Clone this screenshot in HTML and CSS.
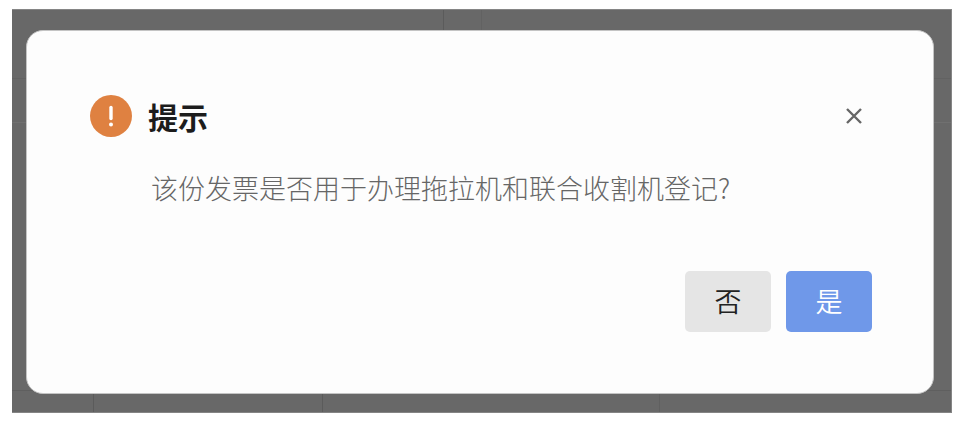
FILE: index.html
```
<!DOCTYPE html>
<html lang="zh-CN">

<head>
    <meta charset="UTF-8">
    <meta name="viewport" content="width=device-width, initial-scale=1.0">
    <link rel="stylesheet" href="styles.css">
    <title>提示</title>
</head>

<body>
    <main class="overlay">
        <section class="dialog" role="dialog" aria-labelledby="dialog-title" aria-describedby="dialog-message">
            <header class="dialog-header">
                <svg class="warning-icon" viewBox="0 0 42 42" aria-hidden="true">
                    <circle cx="21" cy="21" r="21" fill="#df8141" />
                    <path d="M21 12.5V23.5" stroke="#fff" stroke-width="3.4" stroke-linecap="round" />
                    <circle cx="21" cy="29.6" r="2" fill="#fff" />
                </svg>
                <h1 class="dialog-title" id="dialog-title">提示</h1>
                <button class="close-button" type="button" aria-label="关闭">
                    <svg class="close-icon" viewBox="0 0 16 16" aria-hidden="true">
                        <path d="M1 1L15 15M15 1L1 15" stroke="#666" stroke-width="2.4" />
                    </svg>
                </button>
            </header>
            <p class="dialog-message" id="dialog-message">该份发票是否用于办理拖拉机和联合收割机登记?</p>
            <footer class="dialog-footer">
                <button class="button" type="button">否</button>
                <button class="button button-primary" type="button">是</button>
            </footer>
        </section>
    </main>
</body>

</html>
```
FILE: styles.css
```
* {
    box-sizing: border-box;
}

body {
    margin: 9px 8px 9px 12px;
    background-color: #fff;
    font-family: "Noto Sans CJK SC", sans-serif;
}

/* dimmed page, with the faint grid lines of the form behind it */
.overlay {
    padding: 20px 17px 18px 14px;
    border: 1px solid #858585;
    border-left: 0;
    background-color: #686868;
    background-image:
        linear-gradient(#5b5b5b, #5b5b5b),
        linear-gradient(#626262, #626262),
        linear-gradient(#5b5b5b, #5b5b5b),
        linear-gradient(#5b5b5b, #5b5b5b),
        linear-gradient(#606060, #606060),
        linear-gradient(#626262, #626262),
        linear-gradient(#707070, #707070),
        linear-gradient(#5f5f5f, #5f5f5f);
    background-repeat: no-repeat;
    background-size: 1px 20px, 1px 20px, 1px 18px, 1px 18px, 1px 18px, 100% 1px, 100% 1px, 100% 1px;
    background-position: 46% 0, 50% 0, 81px 100%, 33% 100%, 69% 100%, 0 68px, 0 112px, 0 380px;
}

.dialog {
    padding: 64px 61px 61px 63px;
    border: 1px solid #c4c4c4;
    border-radius: 17px;
    background-color: #fdfdfd;
}

.dialog-header {
    display: flex;
    align-items: center;
    gap: 16px;
}

.warning-icon {
    width: 42px;
    height: 42px;
}

.dialog-title {
    flex-grow: 1;
    margin: 0;
    color: #1c1c1c;
    font-size: 30px;
    font-weight: 700;
    line-height: 40px;
}

.close-button {
    display: flex;
    padding: 10px;
    border: 0;
    background: none;
    cursor: pointer;
}

.close-icon {
    width: 16px;
    height: 16px;
}

.dialog-message {
    margin: 31px 0 0 61px;
    color: #666;
    font-size: 27px;
    font-weight: 300;
    line-height: 40px;
}

.dialog-footer {
    display: flex;
    justify-content: flex-end;
    gap: 15px;
    margin-top: 63px;
}

.button {
    min-width: 86px;
    height: 61px;
    padding: 0 16px 2px;
    border: 0;
    border-radius: 5px;
    background-color: #e5e5e5;
    color: #222;
    font-family: inherit;
    font-size: 27px;
    font-weight: 350;
    cursor: pointer;
}

.button-primary {
    background-color: #6f98e9;
    color: #fff;
}
```
